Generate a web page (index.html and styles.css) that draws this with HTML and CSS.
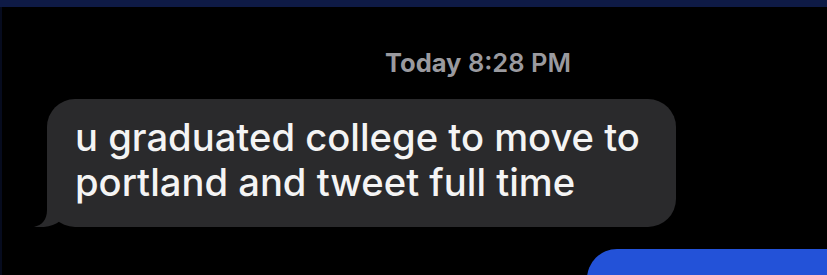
FILE: index.html
```html
<!DOCTYPE html>
<html lang="en">
<head>
    <meta charset="UTF-8">
    <meta name="viewport" content="width=device-width, initial-scale=1.0">
    <title>Messages</title>
    <link rel="stylesheet" href="styles.css">
</head>
<body>
    <div class="topbar"></div>
    <div class="thread">
        <div class="timestamp"><b>Today</b> 8:28 PM</div>
        <div class="row incoming">
            <div class="bubble gray">
                u graduated college to move to portland and tweet full time
                <svg class="tail" width="30" height="30" viewBox="0 0 30 30">
                    <path d="M14 0 L14 13 C14 23 9 28 1 30 C11 31 21 29 27 24 L27 0 Z" fill="#2a2a2c"/>
                </svg>
            </div>
        </div>
        <div class="row outgoing">
            <div class="bubble blue"></div>
        </div>
    </div>
</body>
</html>
```

FILE: styles.css
```css
body {
    margin: 0;
    background-color: #000;
    font-family: Inter, "Liberation Sans", sans-serif;
    height: 275px;
    overflow: hidden;
}
.topbar {
    height: 7px;
    background-color: #0e1a45;
}
.thread {
    border-left: 2px solid #060b1e;
    height: 268px;
    overflow: hidden;
}
.timestamp {
    padding: 41px 0 0 383px;
    font-size: 25.5px;
    line-height: 30px;
    font-weight: 600;
    color: #9a9a9f;
}
.timestamp b {
    font-weight: 700;
}
.row {
    display: flex;
}
.incoming {
    margin-top: 21px;
    padding-left: 45px;
}
.outgoing {
    justify-content: flex-end;
    margin-top: 22px;
    margin-right: -40px;
}
.bubble {
    position: relative;
    box-sizing: border-box;
    border-radius: 28px;
}
.gray {
    width: 629px;
    height: 128px;
    padding: 16px 14px 0 28px;
    background-color: #2a2a2c;
    color: #f4f4f4;
    font-size: 38.2px;
    line-height: 45px;
    font-weight: 500;
}
.tail {
    position: absolute;
    left: -14px;
    bottom: 0;
}
.blue {
    width: 280px;
    height: 60px;
    background-color: #2352d8;
    border-radius: 32px;
}
```
